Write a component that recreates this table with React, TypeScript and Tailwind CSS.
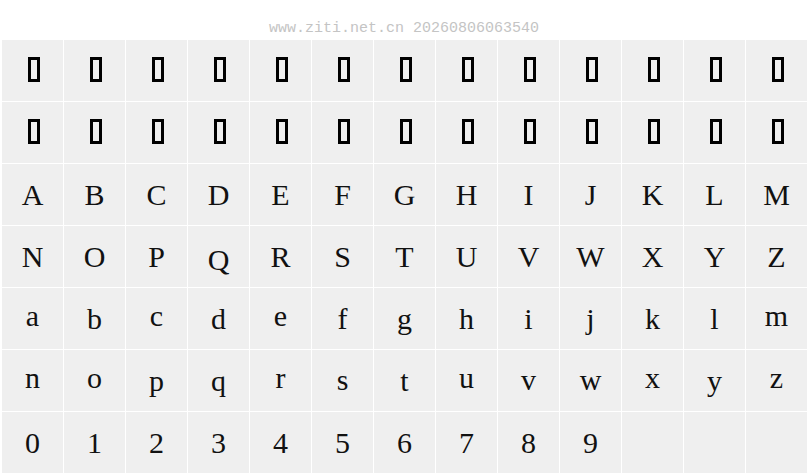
const upper = "ABCDEFGHIJKLMNOPQRSTUVWXYZ".split("");
const lower = "abcdefghijklmnopqrstuvwxyz".split("");
const digits = "0123456789".split("");

type Cell = { kind: "tofu" } | { kind: "char"; ch: string } | { kind: "empty" };

const cells: Cell[] = [
  ...Array.from({ length: 26 }, () => ({ kind: "tofu" as const })),
  ...upper.map((ch) => ({ kind: "char" as const, ch })),
  ...lower.map((ch) => ({ kind: "char" as const, ch })),
  ...digits.map((ch) => ({ kind: "char" as const, ch })),
  ...Array.from({ length: 3 }, () => ({ kind: "empty" as const })),
];

// 원본 폰트는 글자마다 세로 위치가 조금씩 다름
const shift: Record<string, string> = {
  a: "-translate-y-[3px]",
  c: "-translate-y-[3px]",
  e: "-translate-y-[3px]",
  m: "-translate-y-[3px]",
  n: "-translate-y-[3px]",
  o: "-translate-y-[3px]",
  r: "-translate-y-[3px]",
  u: "-translate-y-[3px]",
  x: "-translate-y-[3px]",
  z: "-translate-y-[3px]",
  s: "-translate-y-[1px]",
  v: "-translate-y-[1px]",
  w: "-translate-y-[1px]",
  Q: "translate-y-[3px]",
};

function GlyphCell({ cell }: { cell: Cell }) {
  return (
    <div className="flex h-[61px] w-[61px] items-center justify-center bg-[#efefef]">
      {cell.kind === "tofu" && (
        <div className="ml-[3px] mb-[2px] h-[25px] w-3 border-[3px] border-black" />
      )}
      {cell.kind === "char" && (
        <span
          className={`text-[30px] leading-[30px] text-[#111] [font-family:'Liberation_Serif',serif] ${shift[cell.ch] ?? ""}`}
        >
          {cell.ch}
        </span>
      )}
    </div>
  );
}

export default function App() {
  return (
    <div className="h-[476px] w-[808px] overflow-hidden bg-white">
      {/* 상단 워터마크 */}
      <div className="h-[40px] pt-[21px] text-center text-[15px] leading-[15px] text-[#c4c4c4] [font-family:'Liberation_Mono',monospace]">
        www.ziti.net.cn 20260806063540
      </div>

      {/* 글자 격자 */}
      <div className="grid grid-cols-[repeat(13,61px)] gap-px pl-[2px]">
        {cells.map((cell, i) => (
          <GlyphCell key={i} cell={cell} />
        ))}
      </div>
    </div>
  );
}
